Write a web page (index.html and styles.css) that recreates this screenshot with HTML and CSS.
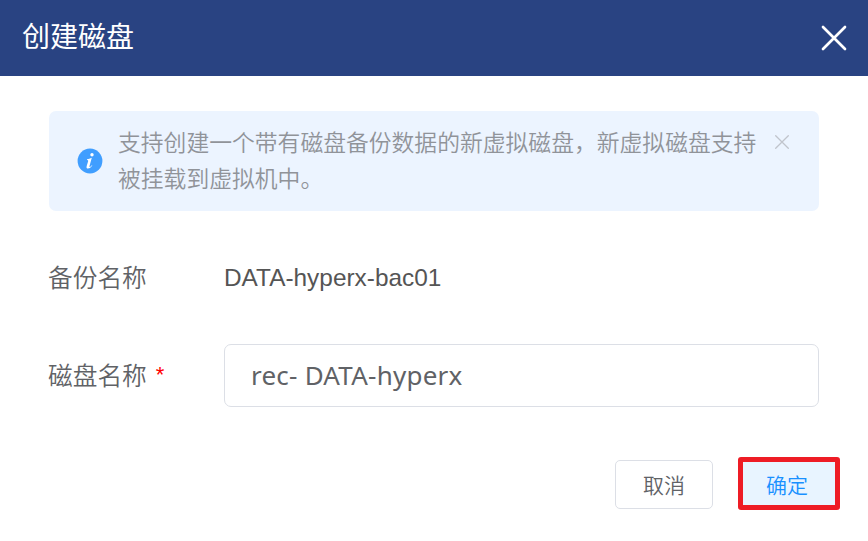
FILE: index.html
```html
<!DOCTYPE html>
<html lang="zh-CN">
<head>
<meta charset="utf-8">
<title>创建磁盘</title>
<link rel="stylesheet" href="styles.css">
</head>
<body>
<div class="dialog">
  <header class="header">
    <h1 class="title">创建磁盘</h1>
    <svg class="close" viewBox="0 0 26 26"><path d="M2 2L24 24M24 2L2 24"/></svg>
  </header>
  <main class="body">
    <div class="alert">
      <svg class="info" viewBox="0 0 26 26">
        <circle cx="13" cy="13" r="12.4" fill="#409eff"/>
        <circle cx="15" cy="6.8" r="1.7" fill="#fff"/>
        <path d="M10 11.3Q12.3 11 14.8 9.8L12.5 18Q12.2 19.4 13.3 18.7T14.8 17.2L15.4 17.6Q13.2 20.6 11 20.6Q9 20.6 9.7 18L11.2 12.9Q11.4 12 10 12Z" fill="#fff"/>
      </svg>
      <p class="message">支持创建一个带有磁盘备份数据的新虚拟磁盘&#xFF0C;新虚拟磁盘支持<br>被挂载到虚拟机中。</p>
      <svg class="dismiss" viewBox="0 0 14 14"><path d="M.7 .7L13.3 13.3M13.3 .7L.7 13.3"/></svg>
    </div>
    <div class="row row-static">
      <span class="label">备份名称</span>
      <span class="value">DATA-hyperx-bac01</span>
    </div>
    <div class="row row-field">
      <label class="label" for="disk">磁盘名称<span class="required">*</span></label>
      <input class="input" id="disk" value="rec- DATA-hyperx">
    </div>
  </main>
  <footer class="footer">
    <button class="button">取消</button>
    <button class="button confirm">确定</button>
  </footer>
</div>
</body>
</html>
```
FILE: styles.css
```css
* { box-sizing: border-box; }
body {
  margin: 0;
  background: #fff;
  color: #606266;
  font-family: "Noto Sans CJK SC", sans-serif;
  font-weight: 350;
}
.dialog { width: 868px; height: 541px; overflow: hidden; }
.header {
  height: 76px;
  padding: 0 21px 0 22px;
  background: #294382;
  display: flex;
  align-items: center;
  justify-content: space-between;
}
.title { margin: 0 0 6px; color: #fff; font-size: 28px; line-height: 40px; font-weight: 400; }
.close { width: 26px; height: 26px; stroke: #fff; stroke-width: 2.7; stroke-linecap: round; fill: none; }
.body { padding: 35px 49px 0; }
.alert {
  height: 100px;
  padding: 13px 30px 0 28px;
  border-radius: 7px;
  background: #ecf4ff;
  display: flex;
  align-items: flex-start;
}
.info { width: 26px; height: 26px; margin: 24px 15px 0 0; flex: none; }
.message { margin: 0; flex: 1; color: #909399; font-size: 22.8px; line-height: 36px; white-space: nowrap; }
.dismiss { width: 14px; height: 14px; margin-top: 11px; flex: none; stroke: #c0c4cc; stroke-width: 1.3; stroke-linecap: round; fill: none; }
.row { display: flex; align-items: center; }
.row-static { height: 63px; margin-top: 35px; }
.row-static .label { margin-bottom: 3px; }
.row-field { height: 63px; margin-top: 35px; }
.row-field .label { margin-bottom: 3px; }
.label { width: 175px; margin-left: -1px; flex: none; font-size: 24.7px; line-height: 36px; }
.required { margin-left: 9px; color: #f00; font-family: "Liberation Sans", sans-serif; font-size: 22px; line-height: 1; vertical-align: 3px; }
.value { margin-left: 1px; color: #555; font-family: "Liberation Sans", sans-serif; font-size: 24.4px; }
.input {
  flex: 1;
  min-width: 0;
  margin-left: 1px;
  height: 63px;
  padding: 0 26px 2px;
  border: 1px solid #dcdfe6;
  border-radius: 7px;
  color: #606266;
  font: 400 26px "Noto Sans", sans-serif;
  letter-spacing: 0.23px;
  outline: none;
}
.footer { display: flex; justify-content: flex-end; align-items: flex-start; height: 53px; margin-top: 50px; padding-right: 28px; gap: 25px; }
.button {
  width: 98px;
  height: 49px;
  margin-top: 3px;
  padding: 0 0 1px;
  border: 1px solid #dcdfe6;
  border-radius: 5px;
  background: #fff;
  color: #606266;
  font: 350 21px "Noto Sans CJK SC", sans-serif;
}
.confirm { width: 102px; height: 53px; margin-top: 0; padding: 0 4px 0 0; border: 5px solid #ee1c25; border-radius: 3px; background: #e8f4ff; color: #1890ff; }
```
